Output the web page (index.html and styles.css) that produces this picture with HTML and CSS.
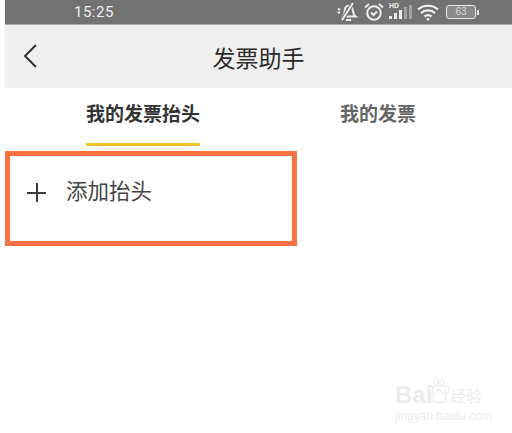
FILE: index.html
```html
<!DOCTYPE html>
<html>
<head>
  <meta charset="utf-8">
  <link rel="stylesheet" href="styles.css">
</head>
<body>
  <div class="status-bar">
    <span class="time">15:25</span>
    <div class="status-icons">
      <svg class="icon-bell" width="22" height="20" viewBox="0 0 22 20" fill="none" stroke="#ececec" stroke-width="2">
        <path d="M6 14.500c2-2 1-6 2.500-9 1.500-2.500 5-2.500 6.500 0 1 3 1 7 3.500 9z"/>
        <path d="M1 6.500l2 1.500M0.500 10.500h2.500M9 18h5"/>
        <path d="M5 18L16 1" stroke="#727272" stroke-width="4"/>
        <path d="M5 18L16 1" stroke-width="2"/>
      </svg>
      <svg class="icon-alarm" width="20" height="20" viewBox="0 0 20 20" fill="none" stroke="#ececec" stroke-width="2">
        <circle cx="10" cy="11" r="6.800"/>
        <path d="M7 10.500l2.500 2.500 3.500-3.500"/>
        <path d="M1 5.500L5 2M19 5.500L15 2"/>
      </svg>
      <div class="signal">
        <span class="hd">HD</span>
        <svg width="23" height="15" viewBox="0 0 23 15">
          <rect x="0" y="11" width="3" height="3" fill="#ececec"/>
          <rect x="5" y="8" width="3" height="6" fill="#ececec"/>
          <rect x="10" y="5" width="3" height="9" fill="#ececec"/>
          <rect x="15" y="2" width="3" height="12" fill="#a0a0a0"/>
          <rect x="20" y="0" width="3" height="14" fill="#a0a0a0"/>
        </svg>
      </div>
      <svg class="icon-wifi" width="23" height="17" viewBox="0 0 23 17" fill="none" stroke="#f2f2f2" stroke-width="2.200">
        <path d="M1 5.500c6-5 14-5 20 0"/>
        <path d="M4 9c4-3.400 10-3.400 14 0"/>
        <path d="M7.500 12.500c2-1.500 5-1.500 7 0"/>
        <circle cx="11" cy="15.300" r="1.500" fill="#f2f2f2" stroke="none"/>
      </svg>
      <div class="battery">
        <div class="battery-body">63</div>
        <div class="battery-tip"></div>
      </div>
    </div>
  </div>

  <div class="nav-bar">
    <svg class="back" width="16" height="26" viewBox="0 0 16 26" fill="none" stroke="#333" stroke-width="2">
      <path d="M14 2L3 13l11 11"/>
    </svg>
    <span class="nav-title">发票助手</span>
  </div>

  <div class="tabs">
    <div class="tab tab-active">我的发票抬头</div>
    <div class="tab">我的发票</div>
  </div>

  <div class="add-box">
    <span class="plus"></span>
    <span class="add-text">添加抬头</span>
  </div>

  <div class="watermark">
    <div class="wm-logo">
      <span class="wm-bai">Bai</span>
      <svg width="22" height="26" viewBox="0 0 50 58" fill="none" stroke="#ececec" stroke-width="3">
        <ellipse cx="7" cy="26" rx="5" ry="8"/>
        <ellipse cx="18" cy="10" rx="5" ry="8"/>
        <ellipse cx="32" cy="10" rx="5" ry="8"/>
        <ellipse cx="43" cy="26" rx="5" ry="8"/>
        <path d="M25 26c-6 0-8 8-13 12-6 6-2 18 7 17 4-1 8-1 12 0 9 1 13-11 7-17-5-4-7-12-13-12z"/>
      </svg>
      <span class="wm-cn">经验</span>
    </div>
    <div class="wm-url">jingyan.baidu.com</div>
  </div>
</body>
</html>
```

FILE: styles.css
```css
* {
  box-sizing: border-box;
}

body {
  margin: 0;
  padding-left: 5px;
  height: 433px;
  overflow: hidden;
  background: #fff;
  font-family: "Liberation Sans", "Noto Sans CJK SC", sans-serif;
  position: relative;
}

.status-bar {
  height: 25px;
  background: #727272;
  border-bottom: 1px solid #a8a8a8;
  display: flex;
  align-items: center;
  color: #eee;
}

.time {
  margin-left: 69px;
  font-family: Roboto, sans-serif;
  font-size: 15px;
  letter-spacing: 0.5px;
}

.status-icons {
  margin-left: auto;
  margin-right: 33px;
  display: flex;
  align-items: center;
  gap: 5px;
}

.signal {
  position: relative;
  width: 23px;
  height: 15px;
}

.hd {
  position: absolute;
  left: 0;
  top: -3px;
  font-size: 7px;
  font-weight: bold;
  color: #eee;
}

.battery {
  display: flex;
  align-items: center;
  margin-left: 1px;
}

.battery-body {
  width: 30px;
  height: 14px;
  border: 1.500px solid #ececec;
  border-radius: 3px;
  font-size: 10px;
  line-height: 11px;
  text-align: center;
  color: #d8d8d8;
  background: #8a8a8a;
}

.battery-tip {
  width: 2px;
  height: 5px;
  margin-left: 1px;
  background: #e8e8e8;
}

.nav-bar {
  height: 63px;
  background: #efefef;
  display: flex;
  align-items: center;
  justify-content: center;
  position: relative;
}

.back {
  position: absolute;
  left: 17px;
  top: 18px;
}

.nav-title {
  font-size: 23px;
  color: #2b2b2b;
}

.tabs {
  height: 58px;
  display: flex;
  padding-left: 81px;
}

.tab {
  height: 58px;
  padding-top: 15px;
  font-size: 19px;
  line-height: 24px;
  font-weight: bold;
  color: #666;
  margin-left: 140px;
}

.tab-active {
  margin-left: 0;
  width: 114px;
  color: #333;
  border-bottom: 3px solid #eec526;
}

.add-box {
  width: 292px;
  height: 95px;
  margin-top: 5px;
  border: 5px solid #fb7143;
  display: flex;
  align-items: flex-start;
  padding: 23px 0 0 17px;
}

.plus {
  width: 19px;
  height: 19px;
  margin-top: 4px;
  background:
    linear-gradient(#3a3a3a, #3a3a3a) center / 100% 2px no-repeat,
    linear-gradient(#3a3a3a, #3a3a3a) center / 2px 100% no-repeat;
}

.add-text {
  margin-left: 20px;
  font-size: 21.500px;
  line-height: 26px;
  color: #444;
}

.watermark {
  position: absolute;
  left: 395px;
  top: 378px;
  width: 117px;
  color: #ececec;
}

.wm-logo {
  display: flex;
  align-items: flex-end;
  height: 30px;
}

.wm-bai {
  font-size: 24px;
  font-weight: bold;
  line-height: 27px;
  width: 33px;
}

.wm-logo svg {
  align-self: flex-start;
  flex: none;
}

.wm-cn {
  font-size: 16px;
  line-height: 20px;
  margin-bottom: 1px;
}

.wm-url {
  font-size: 12px;
  line-height: 14px;
  margin-top: 1px;
  white-space: nowrap;
}
```
